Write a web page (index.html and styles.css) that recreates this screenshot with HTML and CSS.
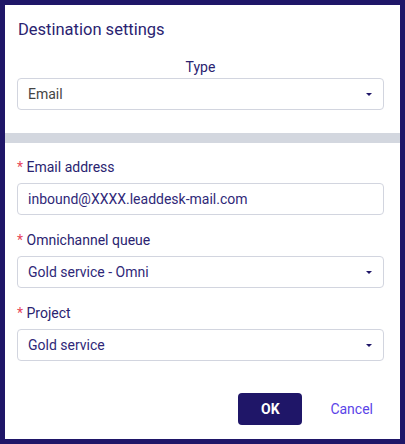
FILE: index.html
```html
<!DOCTYPE html>
<html lang="en">
<head>
    <meta charset="UTF-8">
    <meta name="viewport" content="width=device-width, initial-scale=1.0">
    <title>Destination settings</title>
    <link rel="stylesheet" href="styles.css">
</head>
<body>
    <div class="dialog">
        <h2 class="dialog-title">Destination settings</h2>
        <div class="type-group">
            <label class="type-label">Type</label>
            <div class="select select-gray">
                <span>Email</span>
                <span class="caret"></span>
            </div>
        </div>
        <div class="divider"></div>
        <div class="fields">
            <div class="field">
                <label><span class="req">*</span> Email address</label>
                <div class="input">inbound@XXXX.leaddesk-mail.com</div>
            </div>
            <div class="field">
                <label><span class="req">*</span> Omnichannel queue</label>
                <div class="select">
                    <span>Gold service - Omni</span>
                    <span class="caret"></span>
                </div>
            </div>
            <div class="field">
                <label><span class="req">*</span> Project</label>
                <div class="select">
                    <span>Gold service</span>
                    <span class="caret"></span>
                </div>
            </div>
        </div>
        <div class="actions">
            <button class="btn-ok">OK</button>
            <button class="btn-cancel">Cancel</button>
        </div>
    </div>
</body>
</html>
```

FILE: styles.css
```css
body {
    margin: 0;
    padding: 5px;
    background: #1f1668;
    font-family: Roboto, "Liberation Sans", sans-serif;
    color: #2a2370;
}
.dialog {
    background: white;
    height: 434px;
    box-sizing: border-box;
    padding-top: 1px;
}
.dialog-title {
    margin: 13px 16px 0 13px;
    font-size: 16.5px;
    line-height: 22px;
    font-weight: 400;
}
.type-group {
    padding: 0 16px 0 12px;
    margin-top: 16px;
}
.type-label {
    display: block;
    text-align: center;
    font-size: 14px;
    line-height: 20px;
    font-weight: 400;
    margin-bottom: 1px;
}
.select, .input {
    height: 32px;
    box-sizing: border-box;
    border: 1px solid #d2d5df;
    border-radius: 4px;
    padding: 0 10px;
    display: flex;
    align-items: center;
    justify-content: space-between;
    font-size: 14px;
    color: #2f2878;
}
.select-gray {
    color: #444;
}
.caret {
    width: 0;
    height: 0;
    border-left: 3px solid transparent;
    border-right: 3px solid transparent;
    border-top: 3px solid #1f1668;
    margin-right: 1px;
}
.divider {
    height: 10px;
    background: #d3d7df;
    margin-top: 23px;
}
.fields {
    padding: 0 16px 0 12px;
    margin-top: 14px;
}
.field {
    margin-bottom: 15px;
}
.field label {
    display: block;
    font-size: 14px;
    line-height: 20px;
    font-weight: 400;
    margin-bottom: 6px;
}
.req {
    color: #e8475c;
}
.actions {
    display: flex;
    justify-content: flex-end;
    padding: 0 15px 0 12px;
    margin-top: 32px;
}
.btn-ok {
    width: 64px;
    height: 32px;
    background: #1f1668;
    color: white;
    border: none;
    border-radius: 4px;
    font-family: inherit;
    font-size: 14px;
    font-weight: 700;
    cursor: pointer;
}
.btn-cancel {
    background: none;
    border: none;
    color: #5a44e8;
    font-family: inherit;
    font-size: 14px;
    padding: 0 12px;
    margin-left: 16px;
    cursor: pointer;
}
```
